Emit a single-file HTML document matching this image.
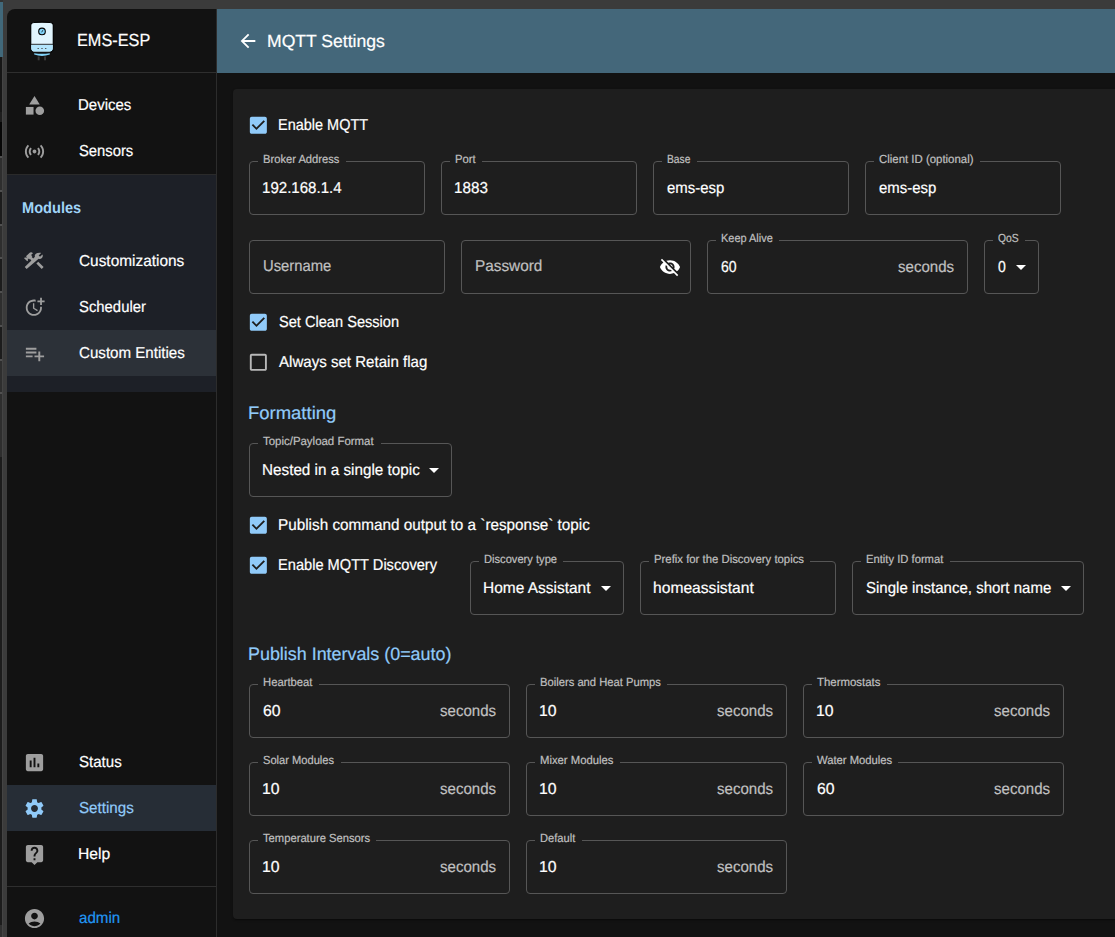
<!DOCTYPE html>
<html><head><meta charset="utf-8"><style>
html,body{margin:0;padding:0;}
body{width:1115px;height:937px;overflow:hidden;position:relative;background:#3b3b3b;font-family:"Liberation Sans", sans-serif;}
.t{position:absolute;white-space:nowrap;line-height:1;-webkit-text-stroke:0.2px currentColor;transform-origin:0 0;text-rendering:geometricPrecision;}
.r{position:absolute;}
.ic{position:absolute;}
.fld{position:absolute;border:1px solid #565656;border-radius:4px;}
.tri{position:absolute;width:0;height:0;border-left:5px solid transparent;border-right:5px solid transparent;border-top:5px solid #fff;}
</style></head><body>
<div class="r" style="left:0px;top:0px;width:2px;height:937px;background:#1c1c1c;"></div>
<div class="r" style="left:0px;top:0px;width:3px;height:2px;background:#333333;"></div>
<div class="r" style="left:0px;top:2px;width:3px;height:55px;background:#41687a;"></div>
<div class="r" style="left:0px;top:57px;width:2px;height:55px;background:#161616;"></div>
<div class="r" style="left:0px;top:112px;width:2px;height:10px;background:#1e1e1e;"></div>
<div class="r" style="left:0px;top:122px;width:2px;height:34px;background:#060606;"></div>
<div class="r" style="left:0px;top:157px;width:2px;height:34px;background:#2e2e2e;"></div>
<div class="r" style="left:0px;top:225px;width:2px;height:33px;background:#2e2e2e;"></div>
<div class="r" style="left:0px;top:292px;width:2px;height:34px;background:#2e2e2e;"></div>
<div class="r" style="left:0px;top:360px;width:2px;height:97px;background:#2e2e2e;"></div>
<div class="r" style="left:0px;top:156px;width:3px;height:2px;background:#505050;"></div>
<div class="r" style="left:0px;top:190px;width:3px;height:2px;background:#505050;"></div>
<div class="r" style="left:0px;top:224px;width:3px;height:2px;background:#505050;"></div>
<div class="r" style="left:0px;top:257px;width:3px;height:2px;background:#505050;"></div>
<div class="r" style="left:0px;top:291px;width:3px;height:2px;background:#505050;"></div>
<div class="r" style="left:0px;top:325px;width:3px;height:2px;background:#505050;"></div>
<div class="r" style="left:0px;top:359px;width:3px;height:2px;background:#505050;"></div>
<div class="r" style="left:0px;top:392px;width:3px;height:2px;background:#505050;"></div>
<div class="r" style="left:0px;top:925px;width:2px;height:12px;background:#303030;"></div>
<div class="r" style="left:2px;top:57px;width:1px;height:880px;background:#444444;"></div>
<div class="r" style="left:7px;top:9px;width:1108px;height:928px;background:#121212;border-top-left-radius:8px;"></div>
<div class="r" style="left:216px;top:9px;width:1px;height:928px;background:#2c2c2c;"></div>
<div class="r" style="left:7px;top:72px;width:209px;height:1px;background:#2e2e2e;"></div>
<div class="r" style="left:7px;top:175px;width:209px;height:217px;background:#1d2027;"></div>
<div class="r" style="left:7px;top:174px;width:209px;height:1px;background:#2a2a2a;"></div>
<div class="r" style="left:7px;top:330px;width:209px;height:46px;background:#2c3138;"></div>
<div class="r" style="left:7px;top:785px;width:209px;height:46px;background:#262d36;"></div>
<div class="r" style="left:7px;top:886px;width:209px;height:1px;background:#2e2e2e;"></div>
<svg class="ic" style="left:28px;top:21px;width:28px;height:40px" viewBox="0 0 28 40">
<path d="M2.7 4.6 Q2.7 1.6 6 1.5 Q14 0.9 22 1.5 Q25.3 1.6 25.3 4.6 L25.3 27 Q25.3 31.2 21.5 31.2 L6.5 31.2 Q2.7 31.2 2.7 27 Z" fill="#e1f5fe" stroke="#000" stroke-width="1.2"/>
<path d="M3.3 23.6 L24.7 23.6 L24.7 27 Q24.7 30.6 21.5 30.6 L6.5 30.6 Q3.3 30.6 3.3 27 Z" fill="#b3e5fc"/>
<line x1="3" y1="23.3" x2="25" y2="23.3" stroke="#1a1a1a" stroke-width="0.9"/>
<circle cx="14" cy="10.4" r="3.3" fill="#81d4fa" stroke="#000" stroke-width="1.1"/>
<line x1="13.5" y1="10.9" x2="15.2" y2="9.3" stroke="#000" stroke-width="0.9"/>
<ellipse cx="10.2" cy="27.5" rx="0.8" ry="0.5" fill="#444"/><ellipse cx="14" cy="27.5" rx="0.8" ry="0.5" fill="#444"/><ellipse cx="17.7" cy="27.5" rx="0.8" ry="0.5" fill="#444"/>
<path d="M6.2 32.2 Q14 33.2 21.8 32.2 L21.8 33.6 Q14 36.4 6.2 33.6 Z" fill="#81d4fa"/>
<rect x="9.7" y="35.5" width="1.9" height="3.8" fill="#3c3c3c"/><rect x="16.1" y="35.5" width="1.9" height="3.8" fill="#3c3c3c"/>
</svg>
<svg class="ic" style="left:22.8px;top:94.0px;width:23px;height:23px" viewBox="0 0 24 24" fill="#9e9e9e"><path d="M12 2l-5.5 9h11z"/><circle cx="17.5" cy="17.5" r="4.5"/><path d="M3 13.5h8v8H3z"/></svg>
<svg class="ic" style="left:22.8px;top:139.5px;width:23px;height:23px" viewBox="0 0 24 24" fill="#9e9e9e"><path d="M7.76 16.24C6.67 15.16 6 13.66 6 12s.67-3.16 1.76-4.24l1.42 1.42C8.45 9.9 8 10.9 8 12c0 1.1.45 2.1 1.17 2.83l-1.41 1.41zm8.48 0C17.33 15.16 18 13.66 18 12s-.67-3.16-1.76-4.24l-1.42 1.42C15.55 9.9 16 10.9 16 12c0 1.1-.45 2.1-1.17 2.83l1.41 1.41zM12 10c-1.1 0-2 .9-2 2s.9 2 2 2 2-.9 2-2-.9-2-2-2zm8 2c0 2.21-.9 4.21-2.35 5.65l1.42 1.42C20.88 17.26 22 14.76 22 12s-1.12-5.26-2.93-7.07l-1.42 1.42C19.1 7.79 20 9.79 20 12zM6.35 6.35L4.93 4.93C3.12 6.74 2 9.24 2 12s1.12 5.26 2.93 7.07l1.42-1.42C4.9 16.21 4 14.21 4 12s.9-4.21 2.35-5.65z"/></svg>
<svg class="ic" style="left:23.55px;top:249.55px;width:21.5px;height:21.5px" viewBox="0 0 24 24" fill="#9e9e9e"><path d="M13.783 15.172l2.121-2.121 5.996 5.996-2.121 2.121zM17.5 10c1.93 0 3.5-1.57 3.5-3.5 0-.58-.16-1.12-.41-1.6l-2.7 2.7-1.49-1.49 2.7-2.7c-.48-.25-1.02-.41-1.6-.41C13.57 3 12 4.57 12 6.5c0 .41.08.8.21 1.16l-1.85 1.85-1.78-1.78.71-.71-1.41-1.41L10 3.49c-1.17-1.17-3.07-1.17-4.24 0L2.22 7.03l1.41 1.41H.81l-.71.71 3.54 3.54.71-.71V9.15l1.41 1.41.71-.71 1.78 1.78-7.41 7.41 2.12 2.12L16.34 9.79c.36.13.75.21 1.16.21z"/></svg>
<svg class="ic" style="left:23.55px;top:296.25px;width:21.5px;height:21.5px" viewBox="0 0 24 24" fill="#9e9e9e"><path d="M10 8v6l4.7 2.9.8-1.2-4-2.4V8z"/><path d="M17.92 12c.05.33.08.66.08 1 0 3.9-3.1 7-7 7s-7-3.1-7-7 3.1-7 7-7c.7 0 1.37.1 2 .29V4.23c-.64-.15-1.31-.23-2-.23-5 0-9 4-9 9s4 9 9 9 9-4 9-9c0-.34-.02-.67-.06-1h-2.02z"/><path d="M20 5V2h-2v3h-3v2h3v3h2V7h3V5z"/></svg>
<svg class="ic" style="left:22.8px;top:342.0px;width:23px;height:23px" viewBox="0 0 24 24" fill="#9e9e9e"><path d="M14 10H3v2h11v-2zm0-4H3v2h11V6zm4 8v-4h-2v4h-4v2h4v4h2v-4h4v-2h-4zM3 16h7v-2H3v2z"/></svg>
<svg class="ic" style="left:22.8px;top:750.5px;width:23px;height:23px" viewBox="0 0 24 24" fill="#9e9e9e"><path d="M19 3H5c-1.1 0-2 .9-2 2v14c0 1.1.9 2 2 2h14c1.1 0 2-.9 2-2V5c0-1.1-.9-2-2-2zM9 17H7v-7h2v7zm4 0h-2V7h2v10zm4 0h-2v-4h2v4z"/></svg>
<svg class="ic" style="left:22.8px;top:796.5px;width:23px;height:23px" viewBox="0 0 24 24" fill="#90caf9"><path d="M19.14 12.94c.04-.3.06-.61.06-.94 0-.32-.02-.64-.07-.94l2.03-1.58c.18-.14.23-.41.12-.61l-1.92-3.32c-.12-.22-.37-.29-.59-.22l-2.39.96c-.5-.38-1.03-.7-1.62-.94l-.36-2.54c-.04-.24-.24-.41-.48-.41h-3.84c-.24 0-.43.17-.47.41l-.36 2.54c-.59.24-1.13.57-1.62.94l-2.39-.96c-.22-.08-.47 0-.59.22L2.74 8.87c-.12.21-.08.47.12.61l2.03 1.58c-.05.3-.09.63-.09.94s.02.64.07.94l-2.03 1.58c-.18.14-.23.41-.12.61l1.92 3.32c.12.22.37.29.59.22l2.39-.96c.5.38 1.03.7 1.62.94l.36 2.54c.05.24.24.41.48.41h3.84c.24 0 .44-.17.47-.41l.36-2.54c.59-.24 1.13-.56 1.62-.94l2.39.96c.22.08.47 0 .59-.22l1.92-3.32c.12-.22.07-.47-.12-.61l-2.01-1.58zM12 15.6c-1.98 0-3.6-1.62-3.6-3.6s1.62-3.6 3.6-3.6 3.6 1.62 3.6 3.6-1.62 3.6-3.6 3.6z"/></svg>
<svg class="ic" style="left:22.8px;top:842.5px;width:23px;height:23px" viewBox="0 0 24 24" fill="#9e9e9e"><path d="M19 2H5c-1.11 0-2 .9-2 2v14c0 1.1.89 2 2 2h4l3 3 3-3h4c1.1 0 2-.9 2-2V4c0-1.1-.9-2-2-2zm-6 16h-2v-2h2v2zm2.07-7.75l-.9.92C13.45 11.9 13 12.5 13 14h-2v-.5c0-1.1.45-2.1 1.17-2.83l1.24-1.26c.37-.36.59-.86.59-1.41 0-1.1-.9-2-2-2s-2 .9-2 2H8c0-2.21 1.79-4 4-4s4 1.79 4 4c0 .88-.36 1.68-.93 2.25z"/></svg>
<svg class="ic" style="left:22.8px;top:906.5px;width:23px;height:23px" viewBox="0 0 24 24" fill="#9e9e9e"><path d="M12 2C6.48 2 2 6.48 2 12s4.48 10 10 10 10-4.48 10-10S17.52 2 12 2zm0 4c1.93 0 3.5 1.57 3.5 3.5S13.93 13 12 13s-3.5-1.57-3.5-3.5S10.07 6 12 6zm0 14c-2.03 0-4.43-.82-6.14-2.88C7.55 15.8 9.68 15 12 15s4.45.8 6.14 2.12C16.43 19.18 14.03 20 12 20z"/></svg>
<div class="r" style="left:217px;top:9px;width:898px;height:64px;background:#44677a;"></div>
<svg class="ic" style="left:237.2px;top:30.1px;width:22px;height:22px" viewBox="0 0 24 24" fill="#fff"><path d="M20 11H7.83l5.59-5.59L12 4l-8 8 8 8 1.41-1.41L7.83 13H20v-2z"/></svg>
<div class="r" style="left:233px;top:89px;width:900px;height:830px;background:#1e1e1e;border-radius:4px;box-shadow:0 2px 1px -1px rgba(0,0,0,0.2),0 1px 1px 0 rgba(0,0,0,0.14),0 1px 3px 0 rgba(0,0,0,0.12);"></div>
<svg class="ic" style="left:246.85px;top:113.95px;width:22.7px;height:22.7px" viewBox="0 0 24 24" fill="#90caf9"><path d="M19 3H5c-1.11 0-2 .9-2 2v14c0 1.1.89 2 2 2h14c1.11 0 2-.9 2-2V5c0-1.1-.89-2-2-2zm-9 14l-5-5 1.41-1.41L10 14.17l7.59-7.59L19 8l-9 9z"/></svg>
<div class="fld" style="left:249px;top:161px;width:174px;height:52px"></div>
<div class="r" style="left:258px;top:160px;width:87.69999999999999px;height:3px;background:#1e1e1e;"></div>
<div class="fld" style="left:441px;top:161px;width:194px;height:52px"></div>
<div class="r" style="left:450px;top:160px;width:32px;height:3px;background:#1e1e1e;"></div>
<div class="fld" style="left:653px;top:161px;width:194px;height:52px"></div>
<div class="r" style="left:662px;top:160px;width:34.5px;height:3px;background:#1e1e1e;"></div>
<div class="fld" style="left:865px;top:161px;width:194px;height:52px"></div>
<div class="r" style="left:874px;top:160px;width:105.79999999999995px;height:3px;background:#1e1e1e;"></div>
<div class="fld" style="left:249px;top:240px;width:194px;height:52px"></div>
<div class="fld" style="left:461px;top:240px;width:228px;height:52px"></div>
<svg class="ic" style="left:659.0px;top:256.0px;width:22px;height:22px" viewBox="0 0 24 24" fill="#fff"><path d="M12 7c2.76 0 5 2.24 5 5 0 .65-.13 1.26-.36 1.83l2.92 2.92c1.51-1.26 2.7-2.89 3.43-4.75-1.73-4.39-6-7.5-10.99-7.5-1.4 0-2.74.25-3.98.7l2.16 2.16C10.74 7.130 11.35 7 12 7zM2 4.27l2.28 2.28.46.46C3.08 8.3 1.78 10.02 1 12c1.730 4.39 6 7.5 11 7.5 1.55 0 3.03-.3 4.38-.84l.42.42L19.73 22 21 20.73 3.27 3 2 4.27zM7.53 9.8l1.55 1.55c-.05.21-.08.43-.08.65 0 1.66 1.34 3 3 3 .22 0 .44-.03.65-.08l1.55 1.55c-.67.33-1.41.53-2.2.53-2.76 0-5-2.24-5-5 0-.79.2-1.53.53-2.2zm4.31-.78l3.15 3.15.02-.16c0-1.66-1.34-3-3-3l-.17.01z"/></svg>
<div class="fld" style="left:707px;top:240px;width:259px;height:52px"></div>
<div class="r" style="left:716px;top:239px;width:63px;height:3px;background:#1e1e1e;"></div>
<div class="fld" style="left:984px;top:240px;width:53px;height:52px"></div>
<div class="r" style="left:993px;top:239px;width:32px;height:3px;background:#1e1e1e;"></div>
<div class="tri" style="left:1016px;top:265px"></div>
<svg class="ic" style="left:246.85px;top:310.75px;width:22.7px;height:22.7px" viewBox="0 0 24 24" fill="#90caf9"><path d="M19 3H5c-1.11 0-2 .9-2 2v14c0 1.1.89 2 2 2h14c1.11 0 2-.9 2-2V5c0-1.1-.89-2-2-2zm-9 14l-5-5 1.41-1.41L10 14.17l7.59-7.59L19 8l-9 9z"/></svg>
<svg class="ic" style="left:246.85px;top:350.75px;width:22.7px;height:22.7px" viewBox="0 0 24 24" fill="#b8b8b8"><path d="M19 5v14H5V5h14m0-2H5c-1.1 0-2 .9-2 2v14c0 1.1.9 2 2 2h14c1.1 0 2-.9 2-2V5c0-1.1-.9-2-2-2z"/></svg>
<div class="fld" style="left:249px;top:443px;width:201px;height:52px"></div>
<div class="r" style="left:258px;top:442px;width:122.5px;height:3px;background:#1e1e1e;"></div>
<div class="tri" style="left:429px;top:468px"></div>
<svg class="ic" style="left:246.85px;top:513.85px;width:22.7px;height:22.7px" viewBox="0 0 24 24" fill="#90caf9"><path d="M19 3H5c-1.11 0-2 .9-2 2v14c0 1.1.89 2 2 2h14c1.11 0 2-.9 2-2V5c0-1.1-.89-2-2-2zm-9 14l-5-5 1.41-1.41L10 14.17l7.59-7.59L19 8l-9 9z"/></svg>
<svg class="ic" style="left:246.85px;top:553.75px;width:22.7px;height:22.7px" viewBox="0 0 24 24" fill="#90caf9"><path d="M19 3H5c-1.11 0-2 .9-2 2v14c0 1.1.89 2 2 2h14c1.11 0 2-.9 2-2V5c0-1.1-.89-2-2-2zm-9 14l-5-5 1.41-1.41L10 14.17l7.59-7.59L19 8l-9 9z"/></svg>
<div class="fld" style="left:470px;top:561px;width:152px;height:52px"></div>
<div class="r" style="left:479px;top:560px;width:83.70000000000005px;height:3px;background:#1e1e1e;"></div>
<div class="tri" style="left:601px;top:586px"></div>
<div class="fld" style="left:640px;top:561px;width:194px;height:52px"></div>
<div class="r" style="left:649px;top:560px;width:161px;height:3px;background:#1e1e1e;"></div>
<div class="fld" style="left:852px;top:561px;width:230px;height:52px"></div>
<div class="r" style="left:861px;top:560px;width:89px;height:3px;background:#1e1e1e;"></div>
<div class="tri" style="left:1061px;top:586px"></div>
<div class="fld" style="left:249px;top:684px;width:259px;height:52px"></div>
<div class="r" style="left:258px;top:683px;width:60.60000000000002px;height:3px;background:#1e1e1e;"></div>
<div class="fld" style="left:526px;top:684px;width:259px;height:52px"></div>
<div class="r" style="left:535px;top:683px;width:131.70000000000005px;height:3px;background:#1e1e1e;"></div>
<div class="fld" style="left:803px;top:684px;width:259px;height:52px"></div>
<div class="r" style="left:812px;top:683px;width:74.89999999999998px;height:3px;background:#1e1e1e;"></div>
<div class="fld" style="left:249px;top:762px;width:259px;height:52px"></div>
<div class="r" style="left:258px;top:761px;width:82.60000000000002px;height:3px;background:#1e1e1e;"></div>
<div class="fld" style="left:526px;top:762px;width:259px;height:52px"></div>
<div class="r" style="left:535px;top:761px;width:84.70000000000005px;height:3px;background:#1e1e1e;"></div>
<div class="fld" style="left:803px;top:762px;width:259px;height:52px"></div>
<div class="r" style="left:812px;top:761px;width:86.29999999999995px;height:3px;background:#1e1e1e;"></div>
<div class="fld" style="left:249px;top:840px;width:259px;height:52px"></div>
<div class="r" style="left:258px;top:839px;width:118.39999999999998px;height:3px;background:#1e1e1e;"></div>
<div class="fld" style="left:526px;top:840px;width:259px;height:52px"></div>
<div class="r" style="left:535px;top:839px;width:46.799999999999955px;height:3px;background:#1e1e1e;"></div>
<div class="t" style="left:76.87px;top:32px;font-size:17.5px;color:#fff;transform:scaleX(0.9299);">EMS-ESP</div>
<div class="t" style="left:78.15px;top:98px;font-size:15.8px;color:#fff;transform:scaleX(0.9491);">Devices</div>
<div class="t" style="left:79.10px;top:144px;font-size:15.8px;color:#fff;transform:scaleX(0.9362);">Sensors</div>
<div class="t" style="left:79.10px;top:254px;font-size:15.8px;color:#fff;transform:scaleX(0.9741);">Customizations</div>
<div class="t" style="left:79.10px;top:300px;font-size:15.8px;color:#fff;transform:scaleX(0.9408);">Scheduler</div>
<div class="t" style="left:79.10px;top:346px;font-size:15.8px;color:#fff;transform:scaleX(0.9568);">Custom Entities</div>
<div class="t" style="left:79.10px;top:755px;font-size:15.8px;color:#fff;transform:scaleX(0.9533);">Status</div>
<div class="t" style="left:79.10px;top:801px;font-size:15.8px;color:#90caf9;transform:scaleX(0.9596);">Settings</div>
<div class="t" style="left:78.11px;top:847px;font-size:15.8px;color:#fff;transform:scaleX(0.9935);">Help</div>
<div class="t" style="left:79.10px;top:911px;font-size:15.8px;color:#2196f3;transform:scaleX(0.9581);">admin</div>
<div class="t" style="left:21.78px;top:201px;font-size:15.8px;color:#a0d4f8;font-weight:700;-webkit-text-stroke:0;transform:scaleX(0.9238);">Modules</div>
<div class="t" style="left:266.80px;top:33px;font-size:17.5px;color:#fff;transform:scaleX(1.0043);">MQTT Settings</div>
<div class="t" style="left:277.78px;top:118px;font-size:15.8px;color:#fff;transform:scaleX(0.9163);">Enable MQTT</div>
<div class="t" style="left:263.00px;top:154px;font-size:11.8px;color:#c0c0c0;transform:scaleX(0.9469);">Broker Address</div>
<div class="t" style="left:262.05px;top:181px;font-size:15.8px;color:#fff;transform:scaleX(0.9542);">192.168.1.4</div>
<div class="t" style="left:455.00px;top:154px;font-size:11.8px;color:#c0c0c0;transform:scaleX(0.9545);">Port</div>
<div class="t" style="left:454.04px;top:181px;font-size:15.8px;color:#fff;transform:scaleX(0.9647);">1883</div>
<div class="t" style="left:667.00px;top:154px;font-size:11.8px;color:#c0c0c0;transform:scaleX(0.8704);">Base</div>
<div class="t" style="left:667.00px;top:181px;font-size:15.8px;color:#fff;transform:scaleX(0.9450);">ems-esp</div>
<div class="t" style="left:879.00px;top:154px;font-size:11.8px;color:#c0c0c0;transform:scaleX(0.9673);">Client ID (optional)</div>
<div class="t" style="left:879.00px;top:181px;font-size:15.8px;color:#fff;transform:scaleX(0.9450);">ems-esp</div>
<div class="t" style="left:262.56px;top:259px;font-size:15.8px;color:#c0c0c0;transform:scaleX(0.9361);">Username</div>
<div class="t" style="left:474.53px;top:259px;font-size:15.8px;color:#c0c0c0;transform:scaleX(0.9706);">Password</div>
<div class="t" style="left:721.00px;top:233px;font-size:11.8px;color:#c0c0c0;transform:scaleX(0.9286);">Keep Alive</div>
<div class="t" style="left:721.00px;top:260px;font-size:15.8px;color:#fff;transform:scaleX(0.8889);">60</div>
<div class="t" style="left:897.80px;top:260px;font-size:15.8px;color:#c0c0c0;transform:scaleX(0.9525);">seconds</div>
<div class="t" style="left:998.00px;top:233px;font-size:11.8px;color:#c0c0c0;transform:scaleX(0.8750);">QoS</div>
<div class="t" style="left:998.00px;top:260px;font-size:15.8px;color:#fff;transform:scaleX(0.8889);">0</div>
<div class="t" style="left:278.70px;top:315px;font-size:15.8px;color:#fff;transform:scaleX(0.9238);">Set Clean Session</div>
<div class="t" style="left:278.70px;top:355px;font-size:15.8px;color:#fff;transform:scaleX(0.9542);">Always set Retain flag</div>
<div class="t" style="left:248.47px;top:404px;font-size:18px;color:#90caf9;transform:scaleX(1.0262);">Formatting</div>
<div class="t" style="left:263.00px;top:436px;font-size:11.8px;color:#c0c0c0;transform:scaleX(0.9696);">Topic/Payload Format</div>
<div class="t" style="left:262.03px;top:463px;font-size:15.8px;color:#fff;transform:scaleX(0.9660);">Nested in a single topic</div>
<div class="t" style="left:277.73px;top:518px;font-size:15.8px;color:#fff;transform:scaleX(0.9679);">Publish command output to a `response` topic</div>
<div class="t" style="left:277.77px;top:558px;font-size:15.8px;color:#fff;transform:scaleX(0.9257);">Enable MQTT Discovery</div>
<div class="t" style="left:484.00px;top:554px;font-size:11.8px;color:#c0c0c0;transform:scaleX(0.9442);">Discovery type</div>
<div class="t" style="left:483.02px;top:581px;font-size:15.8px;color:#fff;transform:scaleX(0.9798);">Home Assistant</div>
<div class="t" style="left:654.00px;top:554px;font-size:11.8px;color:#c0c0c0;transform:scaleX(0.9615);">Prefix for the Discovery topics</div>
<div class="t" style="left:653.01px;top:581px;font-size:15.8px;color:#fff;transform:scaleX(0.9891);">homeassistant</div>
<div class="t" style="left:866.00px;top:554px;font-size:11.8px;color:#c0c0c0;transform:scaleX(0.9512);">Entity ID format</div>
<div class="t" style="left:866.00px;top:581px;font-size:15.8px;color:#fff;transform:scaleX(0.9503);">Single instance, short name</div>
<div class="t" style="left:248.41px;top:645px;font-size:18px;color:#90caf9;transform:scaleX(0.9941);">Publish Intervals (0=auto)</div>
<div class="t" style="left:263.00px;top:677px;font-size:11.8px;color:#c0c0c0;transform:scaleX(0.9538);">Heartbeat</div>
<div class="t" style="left:263.00px;top:704px;font-size:15.8px;color:#fff;">60</div>
<div class="t" style="left:439.80px;top:704px;font-size:15.8px;color:#c0c0c0;transform:scaleX(0.9525);">seconds</div>
<div class="t" style="left:540.00px;top:677px;font-size:11.8px;color:#c0c0c0;transform:scaleX(0.9504);">Boilers and Heat Pumps</div>
<div class="t" style="left:539.00px;top:704px;font-size:15.8px;color:#fff;">10</div>
<div class="t" style="left:716.80px;top:704px;font-size:15.8px;color:#c0c0c0;transform:scaleX(0.9525);">seconds</div>
<div class="t" style="left:817.00px;top:677px;font-size:11.8px;color:#c0c0c0;transform:scaleX(0.9682);">Thermostats</div>
<div class="t" style="left:816.00px;top:704px;font-size:15.8px;color:#fff;">10</div>
<div class="t" style="left:993.80px;top:704px;font-size:15.8px;color:#c0c0c0;transform:scaleX(0.9525);">seconds</div>
<div class="t" style="left:263.00px;top:755px;font-size:11.8px;color:#c0c0c0;transform:scaleX(0.9421);">Solar Modules</div>
<div class="t" style="left:262.00px;top:782px;font-size:15.8px;color:#fff;">10</div>
<div class="t" style="left:439.80px;top:782px;font-size:15.8px;color:#c0c0c0;transform:scaleX(0.9525);">seconds</div>
<div class="t" style="left:540.00px;top:755px;font-size:11.8px;color:#c0c0c0;transform:scaleX(0.9571);">Mixer Modules</div>
<div class="t" style="left:539.00px;top:782px;font-size:15.8px;color:#fff;">10</div>
<div class="t" style="left:716.80px;top:782px;font-size:15.8px;color:#c0c0c0;transform:scaleX(0.9525);">seconds</div>
<div class="t" style="left:817.00px;top:755px;font-size:11.8px;color:#c0c0c0;transform:scaleX(0.9532);">Water Modules</div>
<div class="t" style="left:817.00px;top:782px;font-size:15.8px;color:#fff;">60</div>
<div class="t" style="left:993.80px;top:782px;font-size:15.8px;color:#c0c0c0;transform:scaleX(0.9525);">seconds</div>
<div class="t" style="left:263.00px;top:833px;font-size:11.8px;color:#c0c0c0;transform:scaleX(0.9504);">Temperature Sensors</div>
<div class="t" style="left:262.00px;top:860px;font-size:15.8px;color:#fff;">10</div>
<div class="t" style="left:439.80px;top:860px;font-size:15.8px;color:#c0c0c0;transform:scaleX(0.9525);">seconds</div>
<div class="t" style="left:540.00px;top:833px;font-size:11.8px;color:#c0c0c0;transform:scaleX(0.9421);">Default</div>
<div class="t" style="left:539.00px;top:860px;font-size:15.8px;color:#fff;">10</div>
<div class="t" style="left:716.80px;top:860px;font-size:15.8px;color:#c0c0c0;transform:scaleX(0.9525);">seconds</div>
</body></html>
